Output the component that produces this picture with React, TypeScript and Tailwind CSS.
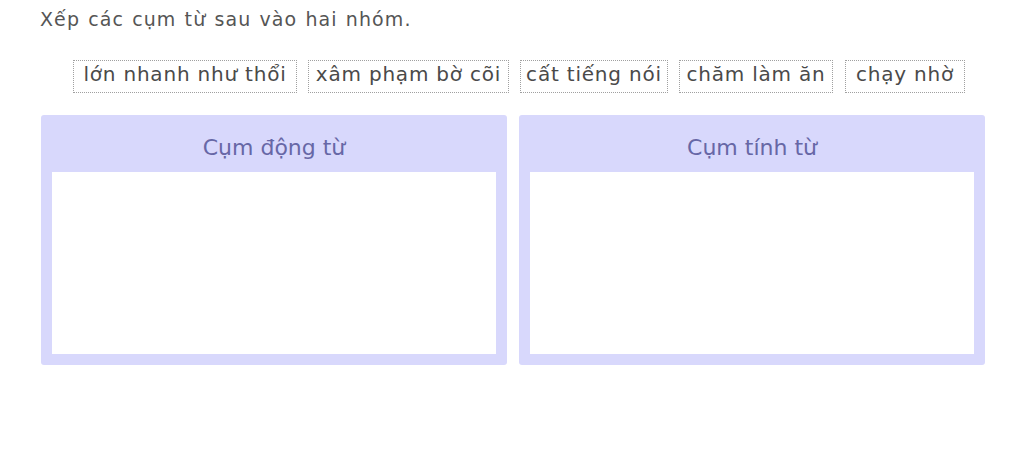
const phrases = [
  { text: "lớn nhanh như thổi", w: "w-[224px]" },
  { text: "xâm phạm bờ cõi", w: "w-[201px]" },
  { text: "cất tiếng nói", w: "w-[148px]" },
  { text: "chăm làm ăn", w: "w-[154px]" },
  { text: "chạy nhờ", w: "w-[120px]" },
];
const groups = ["Cụm động từ", "Cụm tính từ"];

export default function App() {
  return (
    <div className="h-[453px] w-[1024px] bg-white font-['DejaVu_Sans','Noto_Sans',sans-serif]">
      <div className="pl-[40px] pt-[5px]">
        <p className="text-[19px] leading-[28px] tracking-[1.1px] text-[#555] [word-spacing:1px]">
          Xếp các cụm từ sau vào hai nhóm.
        </p>
      </div>

      <div className="mt-[27px] flex pl-[73px]">
        {phrases.map((p, i) => (
          <span
            key={p.text}
            className={`${p.w} ${i === 3 ? "mr-[12px]" : "mr-[11px]"} flex h-[33px] items-center justify-center border border-dotted border-[#a0a0a0] pb-[5px] text-[20px] leading-[23px] tracking-[0.8px] text-[#4a4a4a]`}
          >
            {p.text}
          </span>
        ))}
      </div>

      <div className="mt-[22px] flex gap-[12px] pl-[41px]">
        {groups.map((g) => (
          <div key={g} className="flex h-[250px] w-[466px] flex-col rounded-[3px] bg-[#d8d8fc] px-[11px] pb-[11px]">
            <h2 className="h-[57px] text-center text-[22px] leading-[66px] text-[#6767a6]">{g}</h2>
            <div className="flex-1 bg-white" />
          </div>
        ))}
      </div>
    </div>
  );
}
